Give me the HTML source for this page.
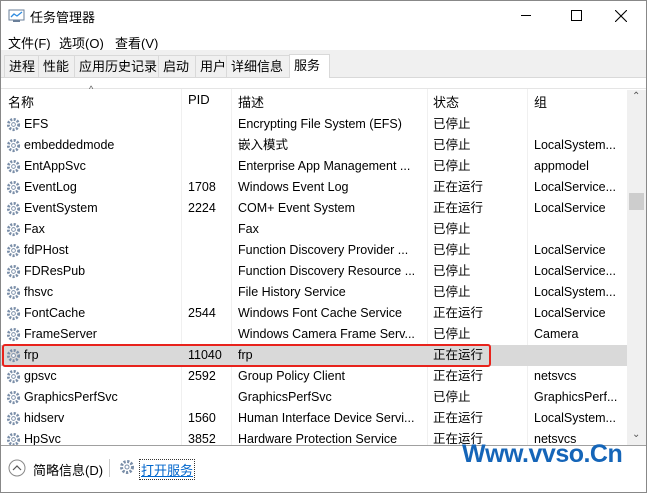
<!DOCTYPE html>
<html><head><meta charset="utf-8"><style>
*{margin:0;padding:0;box-sizing:border-box}
body{width:647px;height:493px;background:#fff;font-family:"Liberation Sans","Noto Sans CJK SC",sans-serif;font-size:12.5px;color:#000;position:relative;overflow:hidden}
.abs{position:absolute;white-space:nowrap}
.tab{position:absolute;top:55px;height:23px;border:1px solid #d9d9d9;background:#f0f0f0;font-size:13px;line-height:21px;padding-left:4px}
.row{position:absolute;left:1px;width:626px;height:21px;line-height:21px}
.row span{position:absolute;top:0;white-space:nowrap}
.gear{position:absolute;left:5px;top:3px;width:15px;height:15px}
.vl{position:absolute;top:89px;width:1px;height:356px;background:#f0f0f0}
</style></head><body>
<div class="abs" style="left:0;top:0;width:647px;height:493px;border:1px solid #888"></div>
<svg class="abs" style="left:8px;top:9px" width="18" height="14"><rect x="1" y="1" width="15" height="10" fill="#fff" stroke="#6a7f99"/><polyline points="3,8 6,5 9,7 14,3" fill="none" stroke="#2e8be0" stroke-width="1.3"/><rect x="5" y="11" width="7" height="2" fill="#6a7f99"/></svg>
<div class="abs" style="left:30px;top:7px;font-size:13px">任务管理器</div>
<div class="abs" style="left:521px;top:15px;width:10px;height:1px;background:#000"></div>
<div class="abs" style="left:571px;top:10px;width:11px;height:11px;border:1px solid #000"></div>
<svg class="abs" style="left:615px;top:10px" width="12" height="12"><path d="M0 0L12 12M12 0L0 12" stroke="#000" stroke-width="1.1"/></svg>
<div class="abs" style="left:8px;top:33px;font-size:13px">文件(F)</div>
<div class="abs" style="left:59px;top:33px;font-size:13px">选项(O)</div>
<div class="abs" style="left:115px;top:33px;font-size:13px">查看(V)</div>
<div class="abs" style="left:1px;top:50px;width:645px;height:28px;background:#f0f0f0;border-bottom:1px solid #d9d9d9"></div>
<div class="tab" style="left:4px;width:35px">进程</div>
<div class="tab" style="left:38px;width:37px">性能</div>
<div class="tab" style="left:74px;width:85px">应用历史记录</div>
<div class="tab" style="left:158px;width:38px">启动</div>
<div class="tab" style="left:195px;width:32px">用户</div>
<div class="tab" style="left:226px;width:64px">详细信息</div>
<div class="tab" style="left:289px;top:54px;width:41px;height:25px;background:#fff;border-bottom:none;line-height:22px">服务</div>
<div class="abs" style="left:1px;top:78px;width:645px;height:11px;background:#fff;border-bottom:1px solid #e5e5e5"></div>
<div class="abs" style="left:89px;top:84px;font-size:9px;color:#555">^</div>
<div class="vl" style="left:181px"></div><div class="vl" style="left:231px"></div><div class="vl" style="left:427px"></div><div class="vl" style="left:527px"></div>
<div class="abs" style="left:8px;top:92px;font-size:13px">名称</div>
<div class="abs" style="left:188px;top:92px;font-size:13px">PID</div>
<div class="abs" style="left:238px;top:92px;font-size:13px">描述</div>
<div class="abs" style="left:433px;top:92px;font-size:13px">状态</div>
<div class="abs" style="left:534px;top:92px;font-size:13px">组</div>
<div class="abs" style="left:627px;top:90px;width:19px;height:355px;background:#f0f0f0"></div>
<div class="abs" style="left:632px;top:91px;font-size:10px;color:#555">⌃</div>
<div class="abs" style="left:629px;top:193px;width:15px;height:17px;background:#cdcdcd"></div>
<div class="abs" style="left:632px;top:429px;font-size:10px;color:#555">⌄</div>
<div id="rows"></div>
<div class="abs" style="left:1px;top:445px;width:645px;height:1px;background:#a0a0a0"></div>
<svg class="abs" style="left:8px;top:459px" width="18" height="18"><circle cx="9" cy="9" r="8" fill="#fff" stroke="#888"/><path d="M5 11L9 7L13 11" fill="none" stroke="#555" stroke-width="1.2"/></svg>
<div class="abs" style="left:33px;top:460px;font-size:13px">简略信息(D)</div>
<div class="abs" style="left:109px;top:459px;width:1px;height:18px;background:#ccc"></div>
<svg class="abs" style="left:119px;top:459px" width="16" height="16"><circle cx="8" cy="8" r="5.5" fill="none" stroke="#7a8ea8" stroke-width="3" stroke-dasharray="2.2 1.5"/><circle cx="8" cy="8" r="2" fill="#fff" stroke="#7a8ea8"/></svg>
<div class="abs" style="left:139px;top:459px;font-size:13px;color:#0066cc;text-decoration:underline;border:1px dotted #333;padding:0 1px">打开服务</div>
<div class="abs" style="left:462px;top:440px;font-size:25px;font-weight:bold;color:#1565b8;font-family:'Liberation Sans',sans-serif;letter-spacing:-0.5px">Www.vvso.Cn</div>
<script>
var d=[["EFS","","Encrypting File System (EFS)","已停止",""],["embeddedmode","","嵌入模式","已停止","LocalSystem..."],["EntAppSvc","","Enterprise App Management ...","已停止","appmodel"],["EventLog","1708","Windows Event Log","正在运行","LocalService..."],["EventSystem","2224","COM+ Event System","正在运行","LocalService"],["Fax","","Fax","已停止",""],["fdPHost","","Function Discovery Provider ...","已停止","LocalService"],["FDResPub","","Function Discovery Resource ...","已停止","LocalService..."],["fhsvc","","File History Service","已停止","LocalSystem..."],["FontCache","2544","Windows Font Cache Service","正在运行","LocalService"],["FrameServer","","Windows Camera Frame Serv...","已停止","Camera"],["frp","11040","frp","正在运行",""],["gpsvc","2592","Group Policy Client","正在运行","netsvcs"],["GraphicsPerfSvc","","GraphicsPerfSvc","已停止","GraphicsPerf..."],["hidserv","1560","Human Interface Device Servi...","正在运行","LocalSystem..."],["HpSvc","3852","Hardware Protection Service","正在运行","netsvcs"]];
var h="";d.forEach(function(r,i){var t=114+i*21;
h+='<div class="row" style="top:'+t+'px;'+(i==11?'background:#d9d9d9;':'')+(t+21>445?'height:'+(445-t)+'px;overflow:hidden;':'')+'"><svg class="gear" viewBox="0 0 16 16"><circle cx="8" cy="8" r="5.5" fill="none" stroke="#7a8ea8" stroke-width="3" stroke-dasharray="2.2 1.5"/><circle cx="8" cy="8" r="2" fill="#fff" stroke="#7a8ea8"/></svg><span style="left:23px">'+r[0]+'</span><span style="left:187px">'+r[1]+'</span><span style="left:237px">'+r[2]+'</span><span style="left:432px">'+r[3]+'</span><span style="left:533px">'+r[4]+'</span></div>';});
h+='<div class="abs" style="left:2px;top:344px;width:489px;height:23px;border:2px solid #e8231c;border-radius:3px"></div>';
document.getElementById("rows").innerHTML=h;
</script>
</body></html>
